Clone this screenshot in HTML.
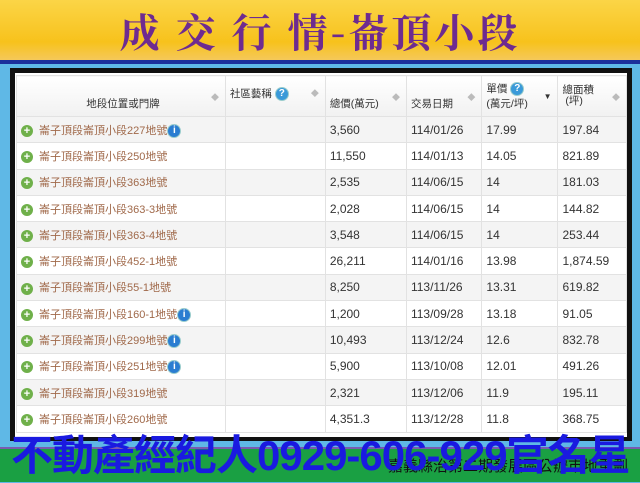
<html><head><style>
body{margin:0;width:640px;height:480px;overflow:hidden;position:relative;background:#5fb8e6;font-family:"Liberation Sans","Noto Sans CJK TC",sans-serif}
#hdr{position:absolute;left:0;top:0;width:640px;height:60px;background:linear-gradient(180deg,#fbd547,#f7c21c 70%,#f5c85a)}
#hdr div{position:absolute;left:0;width:640px;top:2px;text-align:center;font-family:"Noto Serif CJK SC",serif;font-weight:bold;font-size:40px;color:#6e2b90;letter-spacing:3px}
#bl{position:absolute;top:60px;left:0;width:640px;height:4px;background:#1b2f9a}
#panel{position:absolute;left:10px;top:68px;width:612px;height:364px;background:#fff;border:5px solid #111;border-bottom:4px solid #111}
table{position:absolute;left:1px;top:2px;border-collapse:collapse;font-size:12px;color:#333}
td,th{border:1px solid #e2e2e2;height:26.3px;padding:0 0 0 4px;text-align:left;white-space:nowrap}
th{height:41px;font-weight:normal;font-size:10.5px;background:linear-gradient(#fff,#f1f1f1);position:relative}
tr:nth-child(even) td{background:#f4f4f4}
.a{color:#a0694a;font-size:11px;padding-left:4px}
.p{display:inline-block;width:12px;height:12px;border-radius:50%;background:#6fb04a;color:#fff;font-size:11px;line-height:12px;text-align:center;vertical-align:middle;margin-right:6px;font-weight:bold}
.i{display:inline-block;width:12px;height:12px;border-radius:50%;background:#2a7dd1;border:1px solid #9cc;color:#fff;font-size:10px;line-height:12px;text-align:center;vertical-align:middle;font-weight:bold}
.s{position:absolute;right:6px;top:16px;color:#bbb;font-size:8px}
#grn{position:absolute;left:0;top:447px;width:640px;height:33px;background:#1aa043;border-top:2px solid #7a5ab0}
#big{position:absolute;left:11px;top:422px;font-size:42px;font-weight:bold;color:#1a1ae0;letter-spacing:-1px;white-space:nowrap}
#small{position:absolute;right:12px;top:455px;font-size:15px;color:#111}
</style></head><body>
<div id="hdr"><div>成 交 行 情-崙頂小段</div></div>
<div id="bl"></div>
<div id="panel"><table>
<tr><th style="width:205px;text-align:center;padding-top:14px">地段位置或門牌<span class="s">◆</span></th><th style="width:96px;vertical-align:top;padding-top:10px">社區藝稱 <span class="i" style="background:#3a9ad9">?</span><span class="s" style="top:12px">◆</span></th><th style="width:77px;padding-top:14px">總價(萬元)<span class="s">◆</span></th><th style="width:71px;padding-top:14px">交易日期<span class="s">◆</span></th><th style="width:72px">單價 <span class="i" style="background:#3a9ad9">?</span><br>(萬元/坪)<span class="s" style="color:#333">▼</span></th><th style="width:64px;line-height:11px">總面積<br>&nbsp;(坪)<span class="s">◆</span></th></tr>
<tr><td class="a"><span class="p">+</span>崙子頂段崙頂小段227地號<span class="i">i</span></td><td></td><td>3,560</td><td>114/01/26</td><td>17.99</td><td>197.84</td></tr>
<tr><td class="a"><span class="p">+</span>崙子頂段崙頂小段250地號</td><td></td><td>11,550</td><td>114/01/13</td><td>14.05</td><td>821.89</td></tr>
<tr><td class="a"><span class="p">+</span>崙子頂段崙頂小段363地號</td><td></td><td>2,535</td><td>114/06/15</td><td>14</td><td>181.03</td></tr>
<tr><td class="a"><span class="p">+</span>崙子頂段崙頂小段363-3地號</td><td></td><td>2,028</td><td>114/06/15</td><td>14</td><td>144.82</td></tr>
<tr><td class="a"><span class="p">+</span>崙子頂段崙頂小段363-4地號</td><td></td><td>3,548</td><td>114/06/15</td><td>14</td><td>253.44</td></tr>
<tr><td class="a"><span class="p">+</span>崙子頂段崙頂小段452-1地號</td><td></td><td>26,211</td><td>114/01/16</td><td>13.98</td><td>1,874.59</td></tr>
<tr><td class="a"><span class="p">+</span>崙子頂段崙頂小段55-1地號</td><td></td><td>8,250</td><td>113/11/26</td><td>13.31</td><td>619.82</td></tr>
<tr><td class="a"><span class="p">+</span>崙子頂段崙頂小段160-1地號<span class="i">i</span></td><td></td><td>1,200</td><td>113/09/28</td><td>13.18</td><td>91.05</td></tr>
<tr><td class="a"><span class="p">+</span>崙子頂段崙頂小段299地號<span class="i">i</span></td><td></td><td>10,493</td><td>113/12/24</td><td>12.6</td><td>832.78</td></tr>
<tr><td class="a"><span class="p">+</span>崙子頂段崙頂小段251地號<span class="i">i</span></td><td></td><td>5,900</td><td>113/10/08</td><td>12.01</td><td>491.26</td></tr>
<tr><td class="a"><span class="p">+</span>崙子頂段崙頂小段319地號</td><td></td><td>2,321</td><td>113/12/06</td><td>11.9</td><td>195.11</td></tr>
<tr><td class="a"><span class="p">+</span>崙子頂段崙頂小段260地號</td><td></td><td>4,351.3</td><td>113/12/28</td><td>11.8</td><td>368.75</td></tr>
</table></div>
<div id="grn"></div>
<div id="small">嘉義縣治第二期發展區公辦市地重劃</div>
<div id="big">不動產經紀人0929-606-929官名星</div>
</body></html>
